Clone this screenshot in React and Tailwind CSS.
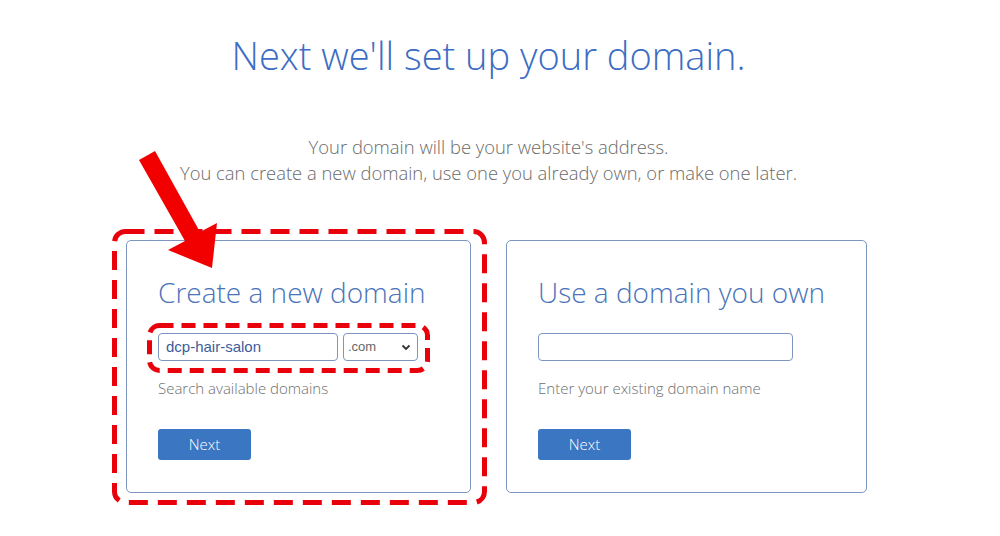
import React from 'react';

const open = { fontFamily: '"Open Sans", "Noto Sans", sans-serif' };
const arial = { fontFamily: '"Liberation Sans", Arial, sans-serif' };

function NextButton() {
  return (
    <button
      className="w-[93px] h-[31px] rounded-[3px] bg-[#3a76c2] text-white text-[15px] font-light"
      style={open}
    >
      Next
    </button>
  );
}

function Card({ title, width, children, hint }) {
  return (
    <div
      className="h-[253px] rounded-[5px] border border-[#7d96bf] pt-[33px] pl-[31px]"
      style={{ width }}
    >
      <h2 className="text-[28px] leading-[36px] font-light text-[#4a73b9] whitespace-nowrap" style={open}>
        {title}
      </h2>
      <div className="mt-[23px] h-[28px]">{children}</div>
      <p className="mt-[17px] text-[15px] leading-[20px] font-light text-[#6e6e6e]" style={open}>
        {hint}
      </p>
      <div className="mt-[31px]">
        <NextButton />
      </div>
    </div>
  );
}

export default function App() {
  return (
    <div className="relative w-[1000px] h-[536px] bg-white overflow-hidden">
      <div className="w-[977px] pt-[32px] text-center" style={open}>
        <h1 className="text-[38px] leading-[46px] font-light text-[#3d6dc3]">
          Next we'll set up your domain.
        </h1>
        <p className="mt-[56px] text-[18.4px] leading-[26px] font-light text-[#6b6b6b]">
          Your domain will be your website's address.
          <br />
          You can create a new domain, use one you already own, or make one later.
        </p>
      </div>

      <div className="mt-[54px] ml-[126px] flex gap-[35px]">
        <Card title="Create a new domain" width={345} hint="Search available domains">
          <div className="flex gap-[5px]">
            <div
              className="w-[180px] h-[28px] rounded-[4px] border border-[#7d96bf] pl-[7px] flex items-center text-[15px] text-[#3b5d9c]"
              style={arial}
            >
              dcp-hair-salon
            </div>
            <div
              className="w-[75px] h-[28px] rounded-[4px] border border-[#7d96bf] pl-[4px] pr-[6px] flex items-center justify-between text-[13px] text-[#666]"
              style={arial}
            >
              <span>.com</span>
              <svg width="10" height="7" viewBox="0 0 10 7">
                <path d="M1.5 1.5 L5 5 L8.5 1.5" fill="none" stroke="#333" strokeWidth="1.8" />
              </svg>
            </div>
          </div>
        </Card>
        <Card title="Use a domain you own" width={361} hint="Enter your existing domain name">
          <div className="w-[255px] h-[28px] rounded-[4px] border border-[#7d96bf]" />
        </Card>
      </div>

      <svg className="absolute left-0 top-0 pointer-events-none" width="1000" height="536">
        <rect
          x="114.5" y="231.5" width="370" height="271" rx="11"
          fill="none" stroke="#e8000b" strokeWidth="5" strokeDasharray="19 10"
        />
        <rect
          x="149.5" y="325.5" width="278" height="45" rx="10"
          fill="none" stroke="#e8000b" strokeWidth="5" strokeDasharray="14 8"
        />
        <polygon
          points="139,160 155,151 200,232 217,223 212,268 168,250 185,241"
          fill="#f20000"
        />
      </svg>
    </div>
  );
}
